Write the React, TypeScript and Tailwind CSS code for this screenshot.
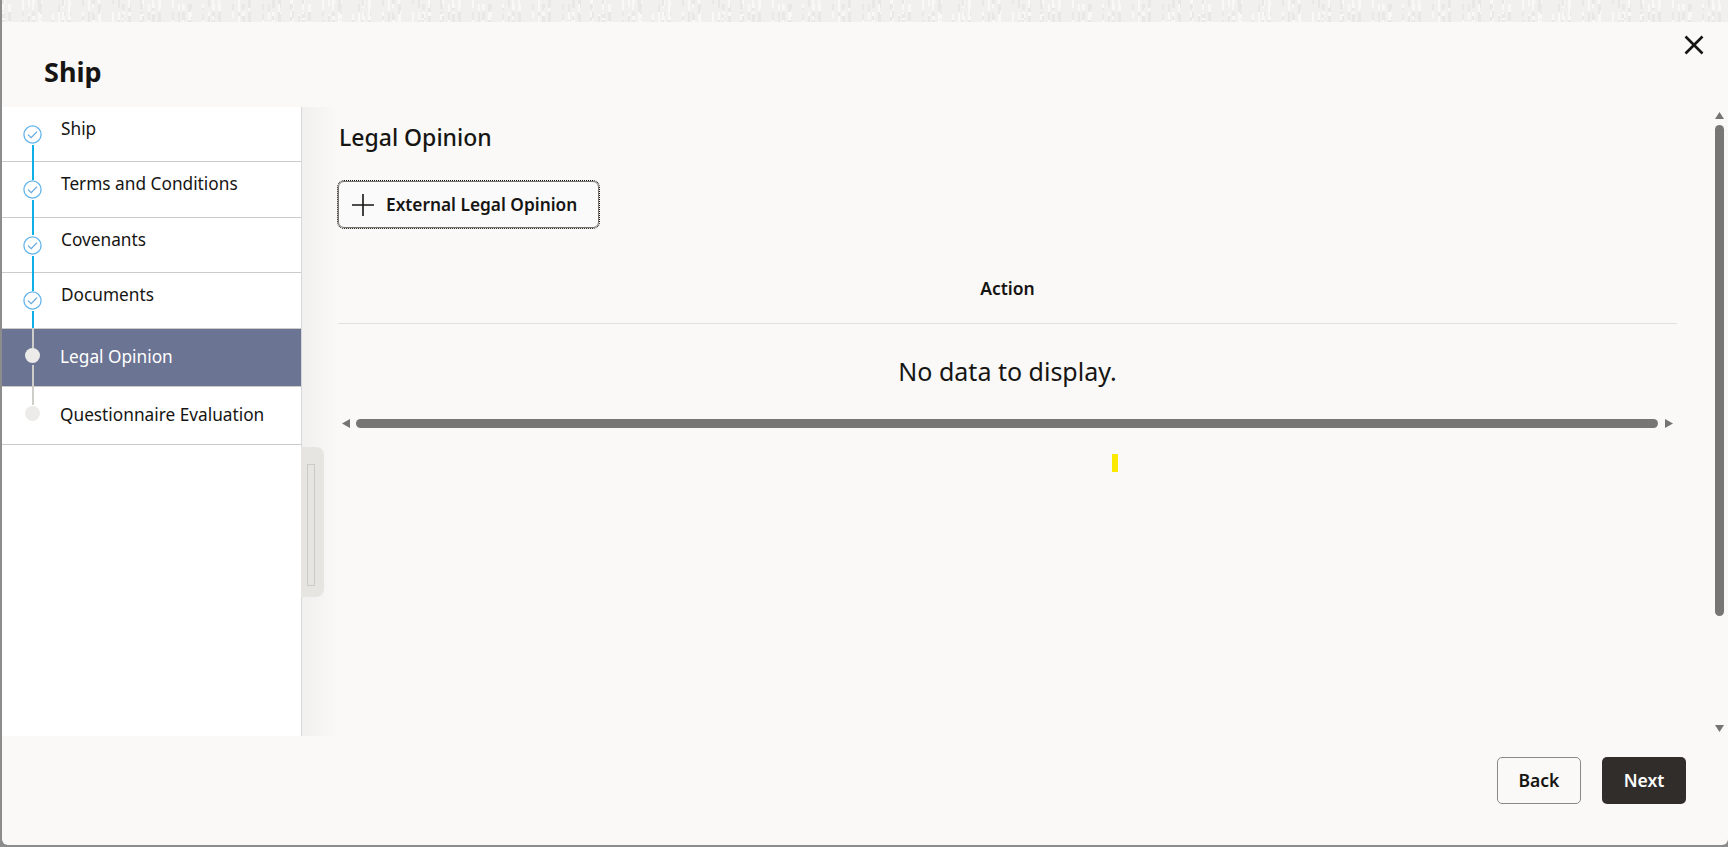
import React from "react";

const steps = [
  { label: "Ship", state: "done" },
  { label: "Terms and Conditions", state: "done" },
  { label: "Covenants", state: "done" },
  { label: "Documents", state: "done" },
  { label: "Legal Opinion", state: "active" },
  { label: "Questionnaire Evaluation", state: "todo" },
];

const rowHeights = ["h-[55px]", "h-[56px]", "h-[55px]", "h-[56px]", "h-[58px]", "h-[58px]"];

// speckled page behind the dialog
function Speckle() {
  const marks = [];
  for (let i = 0; i < 420; i++) {
    const x = (i * i * 7 + i * 31) % 300;
    const y = (i * i * 3 + i * 11) % 22;
    marks.push(<rect key={i} x={x} y={y} width={i % 3 === 0 ? 3 : 2} height={4 + (i % 5)} fill={i % 2 ? "#e9e8e6" : "#f9f8f7"} />);
  }
  return (
    <svg width="100%" height="22" className="block">
      <defs>
        <pattern id="speckle" width="300" height="22" patternUnits="userSpaceOnUse">
          {marks}
        </pattern>
      </defs>
      <rect width="100%" height="22" fill="url(#speckle)" />
    </svg>
  );
}

function StepIcon({ state }: { state: string }) {
  if (state === "done") {
    return (
      <svg width="19" height="19" viewBox="0 0 19 19" fill="none" className="absolute left-[21px] top-[18px] z-10">
        <circle cx="9.5" cy="9.5" r="8.6" stroke="#62b4ec" strokeWidth="1.3" fill="#fff" />
        <path d="M5 9.6l3.2 3 5.8-6" stroke="#62a6dc" strokeWidth="1.2" />
      </svg>
    );
  }
  return <div className="absolute left-[23px] top-[19px] z-10 w-[15px] h-[15px] rounded-full bg-[#ecebe9]" />;
}

function Step({ label, state, index }: { label: string; state: string; index: number }) {
  const active = state === "active";
  const isLast = index === steps.length - 1;
  const line = index < 4 ? "bg-[#0eaee6]" : "bg-[#cfcdca]";
  return (
    <div className={`relative ${rowHeights[index]} border-b border-[#cdcbc8] flex ${index < 4 ? "pt-[8px] pl-[59px]" : "items-center pb-[2px] pl-[58px]"} ${active ? "bg-[#6c7493] text-white" : "text-[#161513]"}`}>
      <StepIcon state={state} />
      {!isLast && (
        <div className={`absolute left-[30px] w-[2px] z-0 ${line} ${index < 4 ? "top-[38px] h-[35px]" : "top-[36px] h-[40px]"}`} />
      )}
      {index === 3 && <div className="absolute left-[30px] w-[2px] top-[55px] h-[18px] bg-[#cfcdca]" />}
      {active && <div className="absolute left-[30px] w-[2px] -top-[1px] h-[20px] bg-[#cfcdca]" />}
      <span className="text-[17.25px] leading-[28px] h-[28px]">{label}</span>
    </div>
  );
}

function Triangle({ dir }: { dir: "up" | "down" | "left" | "right" }) {
  const pts = { up: "4.5,0 9,7 0,7", down: "0,0 9,0 4.5,7", left: "8,0 8,9 0,4.5", right: "0,0 8,4.5 0,9" }[dir];
  const vertical = dir === "up" || dir === "down";
  return (
    <svg width={vertical ? 9 : 8} height={vertical ? 7 : 9} className="block shrink-0">
      <polygon points={pts} fill="#757472" />
    </svg>
  );
}

export default function App() {
  return (
    <div className="relative h-[847px] w-full overflow-hidden bg-[#8c8c8c] flex flex-col font-['Noto_Sans',sans-serif] text-[#161513]">
      <div className="h-[22px] bg-[#f1f0ee] ml-[2px] shrink-0">
        <Speckle />
      </div>

      <div className="relative flex-1 ml-[2px] mb-[2px] bg-[#faf9f7] rounded-b-md flex flex-col min-h-0">
        {/* Dialog header */}
        <div className="h-[85px] shrink-0 flex items-start justify-between pl-[42px] pr-[24px]">
          <h1 className="mt-[31px] text-[27px] leading-[38px] font-bold">Ship</h1>
          <button className="mt-[13px]" aria-label="Close">
            <svg width="20" height="20" viewBox="0 0 20 20" fill="none" className="block">
              <path d="M1.5 1.5l17 17M18.5 1.5l-17 17" stroke="#161513" strokeWidth="2.6" />
            </svg>
          </button>
        </div>

        {/* Dialog body */}
        <div className="relative h-[629px] shrink-0 flex">
          <div className="w-[300px] shrink-0 bg-white border-r border-[#d6d8dc]">
            {steps.map((s, i) => (
              <Step key={s.label} label={s.label} state={s.state} index={i} />
            ))}
          </div>

          {/* Panel grabber */}
          <div className="absolute left-[299px] top-[340px] w-[23px] h-[150px] rounded-r-lg bg-[#e6e5e2] pl-[6px] pt-[17px]">
            <div className="w-[8px] h-[122px] border border-[#cccbc8]" />
          </div>

          <div className="flex-1 min-w-0 flex">
            <div className="w-[36px] shrink-0 bg-gradient-to-r from-[#f1f0ee] to-[#faf9f7]" />
            <div className="w-[1339px] shrink-0 flex flex-col">
              <h2 className="mt-[14px] pl-[1px] text-[23px] leading-[32px] font-medium">Legal Opinion</h2>
              <button className="mt-[28px] w-[261px] h-[47px] flex items-center pl-[13px] pt-[1px] gap-[12px] bg-[#fbfafa] rounded-md border border-[#77746f] outline outline-1 outline-dotted outline-[#161513]">
                <svg width="22" height="22" viewBox="0 0 22 22" className="block shrink-0">
                  <path d="M11 0v22M0 11h22" stroke="#161513" strokeWidth="1.6" />
                </svg>
                <span className="text-[17.3px] font-semibold leading-[24px]">External Legal Opinion</span>
              </button>

              <div className="mt-[36px] h-[60px] border-b border-[#e2e1de] flex justify-center pt-[12px]">
                <span className="text-[17.5px] font-semibold leading-[24px]">Action</span>
              </div>
              <div className="mt-[29px] flex justify-center">
                <span className="text-[25px] leading-[36px]">No data to display.</span>
              </div>

              <div className="mt-[30px] flex items-center pl-[4px]">
                <Triangle dir="left" />
                <div className="ml-[6px] w-[1302px] h-[9px] rounded-full bg-[#777674]" />
                <div className="ml-[7px]">
                  <Triangle dir="right" />
                </div>
              </div>

              <div className="mt-[26px] ml-[774px] w-[6px] h-[18px] bg-[#fde800]" />
            </div>

            <div className="ml-[38px] w-[9px] shrink-0 flex flex-col items-center pt-[5px] pb-[4px]">
              <Triangle dir="up" />
              <div className="mt-[6px] w-[9px] h-[491px] rounded-full bg-[#777674]" />
              <div className="mt-auto">
                <Triangle dir="down" />
              </div>
            </div>
          </div>
        </div>

        {/* Dialog footer */}
        <div className="flex-1 flex justify-end items-start gap-[21px] pt-[21px] pr-[42px]">
          <button className="w-[84px] h-[47px] rounded-[5px] border border-[#8b8985] text-[17.5px] font-semibold">Back</button>
          <button className="w-[84px] h-[47px] rounded-[5px] bg-[#312d2a] text-white text-[17.5px] font-semibold">Next</button>
        </div>
      </div>
    </div>
  );
}
